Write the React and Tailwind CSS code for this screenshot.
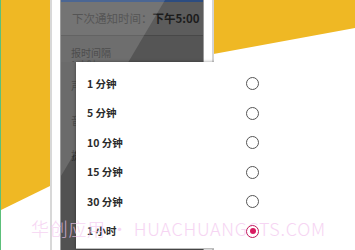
import React from 'react';

const options = [
  { label: '1 分钟', checked: false },
  { label: '5 分钟', checked: false },
  { label: '10 分钟', checked: false },
  { label: '15 分钟', checked: false },
  { label: '30 分钟', checked: false },
  { label: '1 小时', checked: true },
];

const Radio = ({ checked }) => (
  <div
    className={`w-[13px] h-[13px] rounded-full border-[1.5px] flex items-center justify-center bg-white ${
      checked ? 'border-[#c2185b]' : 'border-[#555555]'
    }`}
  >
    {checked && <div className="w-[6px] h-[6px] rounded-full bg-[#d81b60]" />}
  </div>
);

const App = () => {
  return (
    <div
      className="relative w-[355px] h-[250px] overflow-hidden bg-white flex"
      style={{ fontFamily: '"Noto Sans CJK SC", "Noto Sans", sans-serif' }}
    >
      {/* left backdrop */}
      <div className="relative w-[50px] h-full bg-[#efb824] border-l border-[#5cbf7a]">
        <div className="absolute inset-0 bg-white [clip-path:polygon(0_210px,100%_186px,100%_100%,0_100%)]" />
      </div>

      {/* left bezel */}
      <div className="w-[11px] h-full bg-white border-l-2 border-[#d8d8d8] border-r border-r-[#9a9a9a]" />

      {/* screen */}
      <div className="relative flex-1 h-full bg-[#545454] flex flex-col">
        <div className="h-[2px] bg-[#2c4c80]" />
        <div className="h-[34px] bg-[#5c5c5c] border-b border-[#484848] flex items-center pl-[11px] text-[11.5px]">
          <span className="text-[#383838]">下次通知时间：</span>
          <span className="text-[#1c1c1c] font-bold">下午5:00</span>
        </div>
        <div className="h-[26px] bg-[#555555] pl-[10px] pt-[11px] flex flex-col">
          <span className="text-[10px] leading-[12px] text-[#2e2e2e]">报时间隔</span>
          <span className="text-[9px] leading-[10px] text-[#333] mt-[1px]">1 小时</span>
        </div>
        <div className="flex-1 bg-[#525252] pl-[10px] pt-[17px] flex flex-col gap-[23px] text-[11px] leading-[12px] text-[#2e2e2e]">
          <span>声</span>
          <span>音</span>
          <span>提</span>
        </div>

        {/* reflection */}
        <div className="absolute inset-0 bg-white/15 [clip-path:polygon(0_0,104px_0,0_176px)] pointer-events-none" />

        {/* knob peeking out */}
        <div className="absolute left-[212px] top-[163px] w-[4px] h-[9px] rounded-r-full bg-[#383838]" />

        {/* dialog */}
        <div className="absolute left-[15px] top-[62px] w-[198px] h-[187px] bg-white shadow-[0_0_3px_rgba(0,0,0,0.4)] pt-[7px] border-b border-[#bdbdbd]">
          {options.map((o) => (
            <div key={o.label} className="h-[29.5px] flex items-center justify-between pl-[11px] pr-[15px]">
              <span className="text-[10.5px] font-semibold text-[#2b2b2b]">{o.label}</span>
              <div className="relative z-10">
                <Radio checked={o.checked} />
              </div>
            </div>
          ))}
        </div>
      </div>

      {/* right bezel */}
      <div className="w-[11px] h-full bg-white border-l border-[#9a9a9a] border-r-2 border-r-[#d4d4d4]" />

      {/* right backdrop */}
      <div className="relative flex-1 h-full bg-white">
        <div className="absolute inset-0 bg-[#efb824] [clip-path:polygon(0_0,100%_0,100%_28px,0_54px)]" />
      </div>

      {/* watermark */}
      <div className="absolute left-[31px] top-[217px] text-[18px] leading-[22px] font-light text-[#f4c8ef] opacity-75 whitespace-nowrap pointer-events-none tracking-[0.7px]">
        华创应用 • HUACHUANGCTS.COM
      </div>
    </div>
  );
};

export default App;
